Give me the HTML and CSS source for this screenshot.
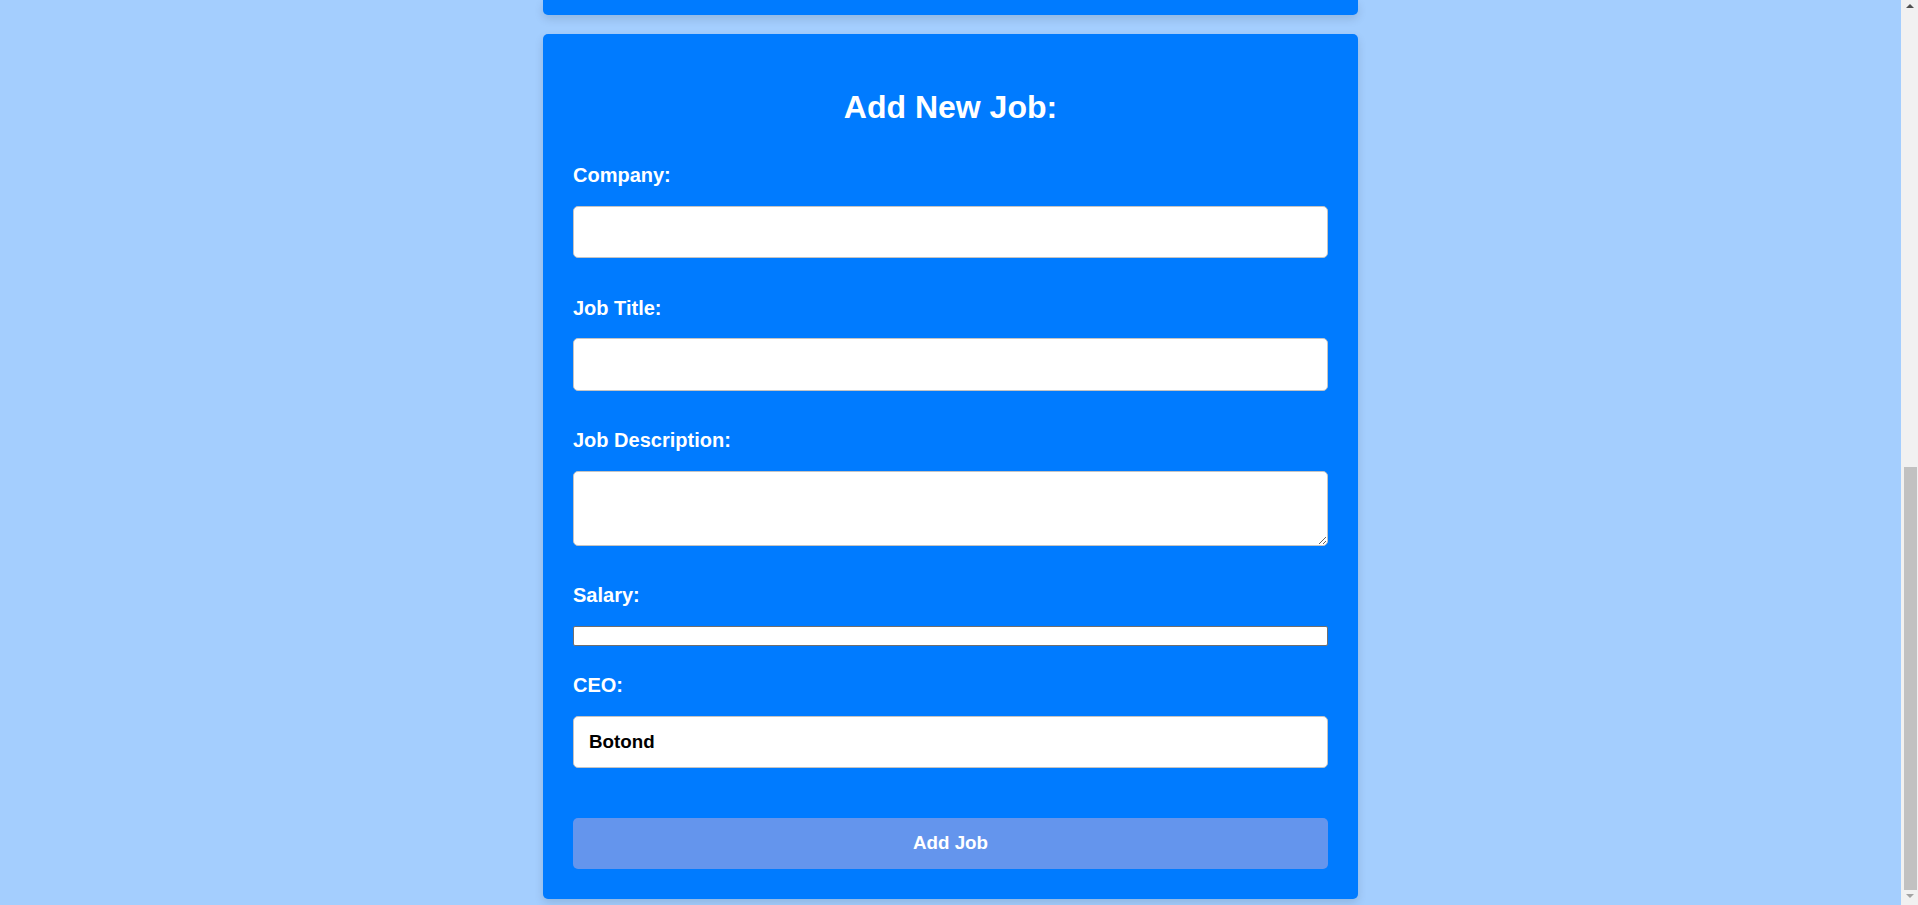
FILE: index.html
```html
<!DOCTYPE html>
<html lang="en">
<head>
<meta charset="utf-8">
<title>Add New Job</title>
<link rel="stylesheet" href="styles.css">
</head>
<body>
<div class="viewport">
  <main class="page">
    <div class="card card-prev"></div>
    <section class="card card-form">
      <h2 class="title">Add New Job:</h2>
      <form class="job-form">
        <div class="group">
          <label class="label" for="company">Company:</label>
          <input class="field" id="company" type="text">
        </div>
        <div class="group">
          <label class="label" for="title">Job Title:</label>
          <input class="field" id="title" type="text">
        </div>
        <div class="group">
          <label class="label" for="desc">Job Description:</label>
          <textarea class="field field-area" id="desc"></textarea>
        </div>
        <div class="group">
          <label class="label" for="salary">Salary:</label>
          <input class="plain" id="salary" type="text">
        </div>
        <div class="group">
          <label class="label" for="ceo">CEO:</label>
          <input class="field" id="ceo" type="text" value="Botond">
        </div>
        <button class="submit" type="button">Add Job</button>
      </form>
    </section>
  </main>
  <div class="scrollbar">
    <div class="sb-btn"><span class="arrow-up"></span></div>
    <div class="sb-track"></div>
    <div class="sb-thumb"></div>
    <div class="sb-btn sb-btn-down"><span class="arrow-down"></span></div>
  </div>
</div>
</body>
</html>
```

FILE: styles.css
```css
html, body {
  margin: 0;
  padding: 0;
  height: 100%;
  overflow: hidden;
}

body {
  background: #a4cefe;
  font-family: "Liberation Sans", Arial, sans-serif;
  color: #fff;
}

.viewport {
  display: flex;
  height: 905px;
}

.page {
  flex: 1;
  display: flex;
  flex-direction: column;
  align-items: center;
}

.card {
  width: 815px;
  box-sizing: border-box;
  background: #007bff;
  border-radius: 5px;
  box-shadow: 0 4px 10px rgba(0, 0, 0, 0.12);
}

.card-prev {
  height: 15px;
  border-radius: 0 0 5px 5px;
  margin-bottom: 19px;
}

.card-form {
  padding: 30px;
}

.title {
  margin: 25.2px 0 37.5px;
  font-size: 32px;
  line-height: 36.8px;
  font-weight: bold;
  text-align: center;
}

.job-form {
  display: flex;
  flex-direction: column;
}

.group {
  display: flex;
  flex-direction: column;
  margin-bottom: 27px;
}

.label {
  font-size: 20px;
  line-height: 23px;
  font-weight: bold;
  padding-top: 1px;
  margin-bottom: 18.5px;
}

.field {
  box-sizing: border-box;
  width: 100%;
  height: 52.5px;
  margin: 0 0 10.5px;
  padding: 0 15px;
  border: 1px solid #c4c4c4;
  border-radius: 5px;
  background: #fff;
  color: #000;
  font-family: "Liberation Sans", Arial, sans-serif;
  font-size: 18.75px;
  font-weight: bold;
  outline: none;
}

.field-area {
  height: 75px;
  padding: 14px 15px;
  resize: vertical;
  display: block;
}

.plain {
  box-sizing: border-box;
  width: 100%;
  height: 20.5px;
  margin: 0;
  padding: 0 2px;
  border: 1px solid #6f6f6f;
  border-radius: 2px;
  background: #fff;
  font-family: "Liberation Sans", Arial, sans-serif;
  font-size: 16px;
}

.submit {
  margin-top: 12px;
  height: 51px;
  width: 100%;
  border: none;
  border-radius: 5px;
  background: #6495ed;
  color: #fff;
  font-family: "Liberation Sans", Arial, sans-serif;
  font-size: 18.75px;
  font-weight: bold;
}

.scrollbar {
  width: 17px;
  flex: none;
  background: #f1f1f1;
  display: flex;
  flex-direction: column;
}

.sb-btn {
  height: 17px;
  display: flex;
  justify-content: center;
  align-items: flex-start;
  padding-top: 4px;
  padding-left: 1px;
  box-sizing: border-box;
}

.sb-btn-down {
  height: 15px;
  align-items: flex-end;
  padding-top: 0;
  padding-bottom: 7px;
}

.arrow-up {
  width: 0;
  height: 0;
  border-left: 4px solid transparent;
  border-right: 4px solid transparent;
  border-bottom: 4px solid #505050;
}

.arrow-down {
  width: 0;
  height: 0;
  border-left: 4px solid transparent;
  border-right: 4px solid transparent;
  border-top: 4px solid #a3a3a3;
}

.sb-track {
  flex: 1;
}

.sb-thumb {
  height: 423px;
  margin: 0 1px 0 3px;
  background: #c1c1c1;
}
```
